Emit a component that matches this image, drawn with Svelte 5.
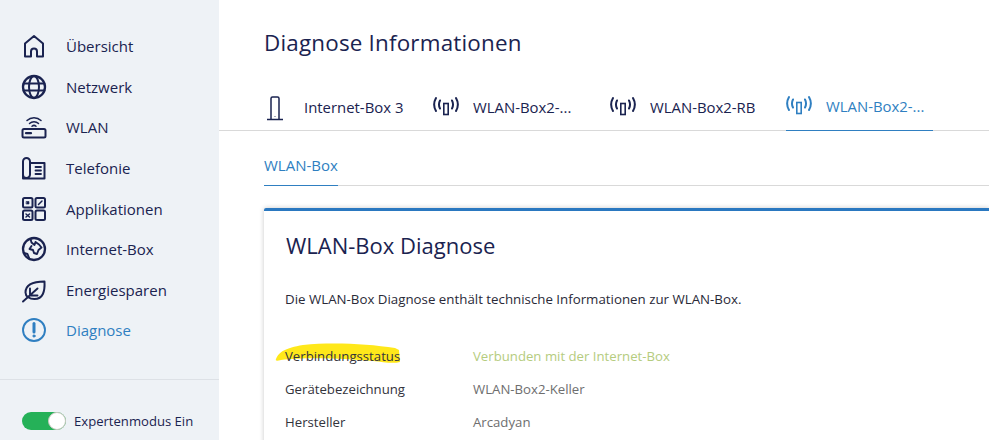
<script>
  const nav = [
    { id: 'home', label: 'Übersicht' },
    { id: 'globe', label: 'Netzwerk' },
    { id: 'wifi', label: 'WLAN' },
    { id: 'phone', label: 'Telefonie' },
    { id: 'apps', label: 'Applikationen' },
    { id: 'earth', label: 'Internet-Box' },
    { id: 'leaf', label: 'Energiesparen' },
    { id: 'info', label: 'Diagnose', active: true }
  ];

  const devices = [
    { label: 'Internet-Box 3', icon: 'box', width: 169 },
    { label: 'WLAN-Box2-...', icon: 'ant', width: 177 },
    { label: 'WLAN-Box2-RB', icon: 'ant', width: 176 },
    { label: 'WLAN-Box2-...', icon: 'ant', width: 147, active: true }
  ];

  const rows = [
    { key: 'Verbindungsstatus', value: 'Verbunden mit der Internet-Box', ok: true, mark: true },
    { key: 'Gerätebezeichnung', value: 'WLAN-Box2-Keller' },
    { key: 'Hersteller', value: 'Arcadyan' }
  ];
</script>

<div class="page">
  <aside class="side">
    <nav class="menu">
      {#each nav as item}
        <div class="item" class:active={item.active}>
          <svg viewBox="0 0 26 26" width="26" height="26" fill="none" stroke="currentColor" stroke-width="2" stroke-linejoin="round" stroke-linecap="round">
            {#if item.id === 'home'}
              <path d="M4 23.500V10.500L13 3l9 7.500v13h-6V18.500a3 3 0 0 0-6 0v5z" />
            {:else if item.id === 'globe'}
              <circle cx="13" cy="13" r="11" stroke-width="2.300" />
              <ellipse cx="13" cy="13" rx="5" ry="11" />
              <path d="M2.500 9.500h21M2.500 16.500h21" />
            {:else if item.id === 'wifi'}
              <rect x="1.500" y="15" width="23" height="8.500" rx="1.500" />
              <path d="M5 19.200h5" stroke-width="2.200" />
              <path d="M6 6.500a10 10 0 0 1 14 0M8.500 9.500a6.500 6.500 0 0 1 9 0M11 12.300a3 3 0 0 1 4 0" stroke-width="1.500" />
            {:else if item.id === 'phone'}
              <path d="M9 8h14.500v15.500H2V8" />
              <path d="M2 19.500V6.500a3.500 3.500 0 0 1 7 0v13a3.500 3.500 0 0 1-7 0z" />
              <path d="M14.500 12h5.500M14.500 15.500h5.500M14.500 19h5.500" stroke-width="1.800" />
            {:else if item.id === 'apps'}
              <rect x="2" y="2" width="9.500" height="9.500" rx="1.500" />
              <rect x="14.500" y="2" width="9.500" height="9.500" rx="1.500" />
              <rect x="2" y="14.500" width="9.500" height="9.500" rx="1.500" />
              <rect x="14.500" y="14.500" width="9.500" height="9.500" rx="1.500" />
              <rect x="5.500" y="5.500" width="2.500" height="2.500" fill="currentColor" stroke-width="0.600" />
              <path d="M17.500 8.500l3.500-3.500M5 21l3.500-3M5 18l3.500 3" stroke-width="1.500" />
            {:else if item.id === 'earth'}
              <circle cx="13" cy="13" r="11" stroke-width="2.300" />
              <path d="M9.500 3l1 3.500 3 2.500 1-3 3.500 2.500 2.500 3-3 2.500-1.500 4-3-1-1-3-3.500-1 2-3M3 17l3.500 1 2 5" stroke-width="1.900" />
            {:else if item.id === 'leaf'}
              <path d="M4.500 15.500C4.500 8.500 11 4.500 23.500 4.500c.5 10-1.500 17.500-10 17.500-5 0-9-2.500-9-6.500z" />
              <path d="M2 24.500L16.500 11.500M9 18.500h7.500M9 18.500v-7" stroke-width="1.900" />
            {:else}
              <circle cx="13" cy="13" r="11" stroke-width="1.900" />
              <path d="M13 6.500v8.500" stroke-width="3" />
              <circle cx="13" cy="19" r="1.100" fill="currentColor" stroke-width="1" />
            {/if}
          </svg>
          <span>{item.label}</span>
        </div>
      {/each}
    </nav>
    <div class="expert">
      <span class="toggle"><span class="knob"></span></span>
      <span>Expertenmodus Ein</span>
    </div>
  </aside>

  <main class="main">
    <h1>Diagnose Informationen</h1>

    <div class="devices">
      {#each devices as d}
        <div class="device" class:active={d.active} style="width: {d.width}px">
          {#if d.icon === 'box'}
            <svg class="ico-box" viewBox="0 0 18 26" width="18" height="26" fill="none" stroke="currentColor" stroke-width="1.500">
              <path d="M5 24V3.500C5 2.500 5.500 2 6.500 2h5c1 0 1.500.5 1.500 1.500V24M1 24.500h16" />
              <path d="M9 21.500v.5" />
            </svg>
          {:else}
            <svg class="ico-ant" viewBox="0 0 26 20" width="26" height="20" fill="none" stroke="currentColor" stroke-width="2" stroke-linecap="round">
              <rect x="10.800" y="7.500" width="4.400" height="11" stroke-width="1.600" />
              <path d="M7 4.500c-1.300 2.500-1.300 5.500 0 8M19 4.500c1.300 2.500 1.300 5.500 0 8M3 2c-2.300 4-2.300 9 0 13M23 2c2.300 4 2.300 9 0 13" />
            </svg>
          {/if}
          <span>{d.label}</span>
        </div>
      {/each}
    </div>

    <div class="subtabs">
      <div class="subtab">WLAN-Box</div>
    </div>

    <section class="card">
      <h2>WLAN-Box Diagnose</h2>
      <p>Die WLAN-Box Diagnose enthält technische Informationen zur WLAN-Box.</p>
      <div class="rows">
        {#each rows as r}
          <div class="row">
            <div class="key">
              {#if r.mark}
                <svg class="marker" viewBox="0 0 130 24" width="130" height="24" aria-hidden="true">
                  <path d="M3 17C6 10 12 6 30 3 60 0 95 2 122 6l4 2 1 12c-7 2-17 0-27-1-30-3-70-4-92-1-4 1-6 1-5-1z" fill="#ffe81a" />
                </svg>
              {/if}
              <span>{r.key}</span>
            </div>
            <div class="val" class:ok={r.ok}>{r.value}</div>
          </div>
        {/each}
      </div>
    </section>
  </main>
</div>

<style>
  :global(body) {
    margin: 0;
    background: #fff;
  }

  .page {
    display: flex;
    width: 989px;
    height: 440px;
    overflow: hidden;
    font-family: "Open Sans", "Liberation Sans", sans-serif;
    color: #1a2350;
  }

  .side {
    flex: 0 0 219px;
    background: #eef2f6;
    box-sizing: border-box;
    padding-top: 26px;
  }

  .menu {
    padding-left: 21px;
    padding-bottom: 28px;
    border-bottom: 1px solid #dde1e6;
  }

  .item {
    display: flex;
    align-items: center;
    gap: 19px;
    height: 40.6px;
    font-size: 15px;
  }

  .item.active {
    color: #2f7fc1;
  }

  .expert {
    display: flex;
    align-items: center;
    gap: 8px;
    padding: 32px 0 0 22px;
    font-size: 13.100px;
  }

  .toggle {
    display: flex;
    justify-content: flex-end;
    width: 44px;
    height: 18px;
    border-radius: 9px;
    background: #25b158;
  }

  .knob {
    box-sizing: border-box;
    width: 18px;
    height: 18px;
    border-radius: 50%;
    background: #fff;
    border: 1px solid #c9c9c0;
  }

  .main {
    flex: 1;
    min-width: 0;
    padding-top: 27px;
  }

  h1 {
    margin: 0 0 0 45px;
    font-size: 22.400px;
    font-weight: 400;
    line-height: 32px;
    letter-spacing: 0.2px;
  }

  .devices {
    display: flex;
    height: 56px;
    margin-top: 15px;
    padding-left: 45px;
    border-bottom: 1px solid #d9d9d9;
  }

  .device {
    display: flex;
    align-items: center;
    gap: 14.500px;
    box-sizing: border-box;
    height: 57px;
    padding-top: 8px;
    font-size: 14.900px;
  }

  .device.active {
    color: #2f7fc1;
    border-bottom: 1px solid #2f7fc1;
  }

  .ico-ant {
    margin-top: -2px;
    flex: none;
  }

  .device:nth-child(1) {
    gap: 20px;
  }

  .device:nth-child(2) {
    margin-left: -0.500px;
  }

  .ico-box {
    flex: none;
    margin-left: 2px;
    margin-top: 3px;
  }

  .subtabs {
    height: 55px;
    box-sizing: border-box;
    margin-left: 45px;
    border-bottom: 1px solid #d9d9d9;
  }

  .subtab {
    display: inline-block;
    box-sizing: border-box;
    height: 55px;
    padding-top: 24px;
    font-size: 15px;
    line-height: 20px;
    color: #2f7fc1;
    border-bottom: 1px solid #2f7fc1;
  }

  .card {
    margin: 22px 0 0 45px;
    padding: 0 0 0 21px;
    height: 260px;
    border-top: 3px solid #2a78c0;
    border-radius: 2px 0 0 0;
    box-shadow: 0 0 5px rgba(0, 0, 0, 0.22);
  }

  h2 {
    margin: 0 0 0 1px;
    padding-top: 18px;
    font-size: 22px;
    line-height: 32px;
    font-weight: 400;
  }

  p {
    margin: 28px 0 0;
    font-size: 13.300px;
    line-height: 20px;
    color: #2a2a38;
  }

  .rows {
    margin-top: 30px;
  }

  .row {
    display: flex;
    height: 33px;
    align-items: center;
    font-size: 13.200px;
  }

  .key {
    position: relative;
    flex: 0 0 188px;
    color: #33333c;
  }

  .key span {
    position: relative;
  }

  .marker {
    position: absolute;
    left: -12px;
    top: -5px;
  }

  .val {
    color: #6e6e6e;
  }

  .val.ok {
    color: #b5cc7e;
  }
</style>
